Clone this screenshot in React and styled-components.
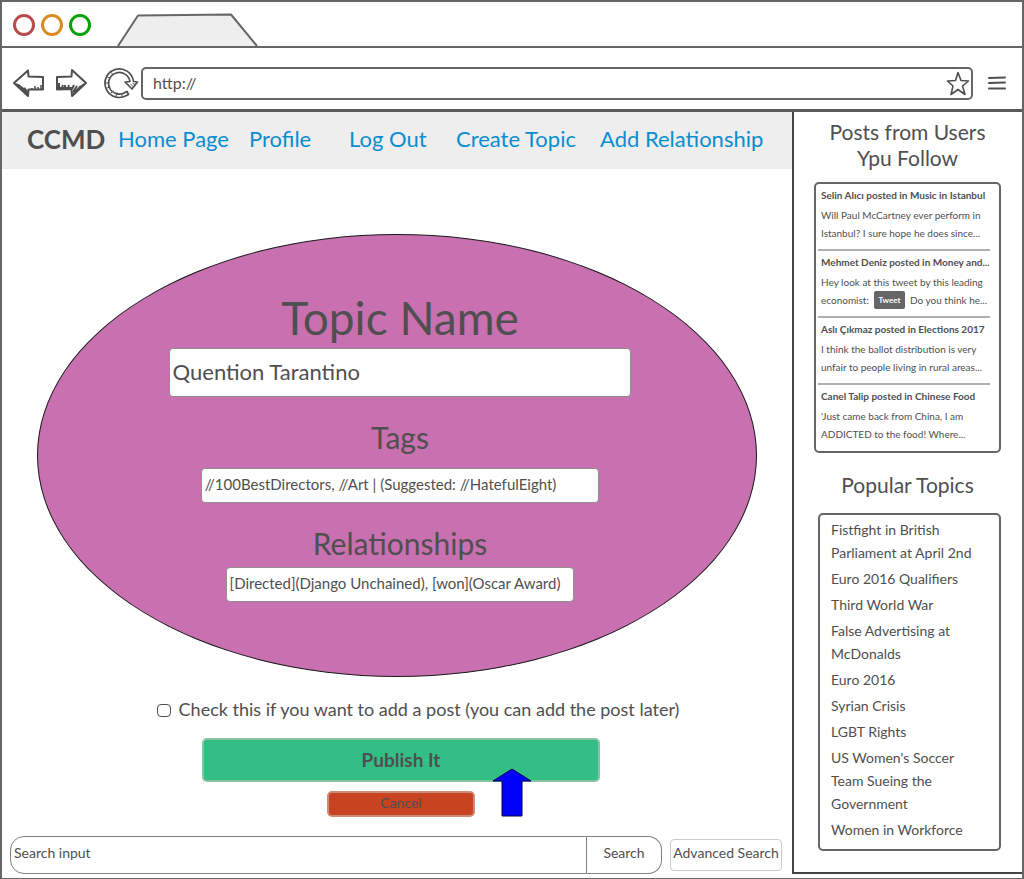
import React from "react";
import styled, { createGlobalStyle } from "styled-components";

const ink = "#4f4f4f";
const line = "#666666";

const GlobalStyle = createGlobalStyle`
  *, *::before, *::after { box-sizing: border-box; }
  body { margin: 0; background: #fff; }
  body, button, input {
    font-family: Lato, "Open Sans", sans-serif;
    color: ${ink};
  }
  h1, h2, h3, p, ul { margin: 0; padding: 0; }
`;

const Window = styled.div`
  display: flex;
  flex-direction: column;
  min-height: 100vh;
  border: 2px solid ${line};
  border-bottom-width: 1px;
`;

const TabBar = styled.div`
  display: flex;
  align-items: flex-end;
  height: 46px;
  border-bottom: 2px solid ${line};
`;

const Lights = styled.div`
  display: flex;
  gap: 6px;
  align-self: center;
  padding: 2px 0 0 11px;
`;

const Light = styled.span`
  width: 22px;
  height: 22px;
  border: 3px solid ${(p) => p.$color};
  border-radius: 50%;
`;

const TabShape = styled.svg`
  display: block;
  margin-left: 25px;
`;

const Toolbar = styled.div`
  display: flex;
  align-items: center;
  height: 64px;
  padding: 9px 16px 0 10px;
  border-bottom: 3px solid #5a5a5a;
`;

const ToolButton = styled.button`
  display: flex;
  flex: none;
  padding: 0;
  margin-right: ${(p) => p.$gap || 0}px;
  border: 0;
  background: none;
`;

const AddressBar = styled.div`
  display: flex;
  flex: 1;
  align-items: center;
  min-width: 0;
  height: 33px;
  margin-right: 15px;
  border: 2px solid ${line};
  border-radius: 5px;
`;

const Address = styled.input`
  flex: 1;
  min-width: 0;
  padding: 0 10px 2px;
  border: 0;
  background: none;
  font-size: 16px;
  outline: none;
`;

const Page = styled.div`
  display: grid;
  flex: 1;
  grid-template-columns: minmax(0, 1fr) 230px;
`;

const Main = styled.main`
  display: flex;
  flex-direction: column;
  padding-bottom: 4px;
`;

const Nav = styled.nav`
  display: grid;
  grid-template-columns: 91fr 131fr 100fr 107fr 144fr 165fr;
  align-items: center;
  height: 57px;
  padding: 0 27px 4px 25px;
  background: #eeeeee;
  white-space: nowrap;
`;

const Brand = styled.strong`
  font-size: 26px;
  line-height: 36px;
`;

const NavLink = styled.a`
  color: #0a8dd0;
  font-size: 22px;
  line-height: 36px;
  text-decoration: none;
`;

const TopicForm = styled.form`
  display: flex;
  flex: 1;
  flex-direction: column;
`;

const Oval = styled.div`
  display: flex;
  flex-direction: column;
  align-items: center;
  margin: 65px 35px 0;
  padding: 55px 0 74px 6px;
  border: 1px solid #1a1a1a;
  border-radius: 50%;
  background: #c970b0;
`;

const FieldLabel = styled.label`
  margin: ${(p) => (p.$large ? 0 : 20)}px 0 ${(p) => p.$space}px;
  font-size: ${(p) => (p.$large ? 46 : 30)}px;
  line-height: ${(p) => (p.$large ? 56 : 40)}px;
`;

const Field = styled.input`
  width: ${(p) => p.$width};
  height: ${(p) => (p.$large ? 49 : 35)}px;
  padding: 0 3px 3px;
  border: 1px solid #8f8f8f;
  border-radius: 4px;
  background: #fff;
  font-size: ${(p) => (p.$large ? 22 : 15)}px;
`;

const Actions = styled.div`
  position: relative;
  display: flex;
  flex-direction: column;
  align-items: center;
  padding: 18px 0 19px 8px;
`;

const CheckLabel = styled.label`
  display: flex;
  align-items: center;
  gap: 8px;
  margin: 0 0 15px 34px;
  font-size: 18px;
  line-height: 28px;
  white-space: nowrap;
`;

const CheckBox = styled.input`
  appearance: none;
  width: 14px;
  height: 13px;
  margin: 2px 0 0;
  border: 1px solid ${ink};
  border-radius: 4px;
  background: #fff;
`;

const PublishButton = styled.button`
  width: 51%;
  height: 44px;
  margin-bottom: 9px;
  padding: 0 0 2px;
  border: 2px solid #86c4a6;
  border-radius: 5px;
  background: #33be86;
  font-size: 19px;
  font-weight: 700;
`;

const CancelButton = styled.button`
  width: 19%;
  height: 26px;
  padding: 0 0 4px;
  border: 2px solid #d08c78;
  border-radius: 5px;
  background: #c8431f;
  font-size: 14px;
`;

const Pointer = styled.svg`
  position: absolute;
  top: 91px;
  left: calc(50% + 95px);
`;

const SearchRow = styled.form`
  display: flex;
  align-items: center;
  margin-top: auto;
  padding: 0 10px 0 8px;
`;

const SearchInput = styled.input`
  flex: 1;
  min-width: 0;
  height: 38px;
  padding: 0 3px 5px;
  border: 1px solid #808080;
  border-radius: 14px 0 0 14px;
  font-size: 14px;
  &::placeholder { color: ${ink}; opacity: 1; }
`;

const SearchButton = styled.button`
  width: 75px;
  height: 38px;
  padding: 0 0 5px;
  border: 1px solid #808080;
  border-left: 0;
  border-radius: 0 14px 14px 0;
  background: #fff;
  font-size: 14px;
`;

const AdvancedButton = styled.button`
  width: 112px;
  height: 32px;
  margin-left: 8px;
  padding: 0 0 5px;
  border: 1px solid #cccccc;
  border-radius: 4px;
  background: #fff;
  font-size: 14px;
  white-space: nowrap;
`;

const Sidebar = styled.aside`
  margin-bottom: 4px;
  padding: 7px 21px 0 20px;
  border: solid #444444;
  border-width: 0 0 2px 2px;
`;

const SideTitle = styled.h2`
  font-size: 21px;
  font-weight: 400;
  line-height: 26px;
  text-align: center;
`;

const PostList = styled.ul`
  height: 271px;
  margin: 11px 0 19px;
  border: 2px solid ${line};
  border-radius: 5px;
  list-style: none;
`;

const Post = styled.li`
  margin: 0 9px 0 2px;
  padding: 0 0 7px 3px;
  border-bottom: 2px solid #b0b0b0;
  white-space: nowrap;
  &:last-child { border-bottom: 0; }
`;

const PostTitle = styled.h3`
  font-size: 10px;
  font-weight: 700;
  line-height: 22px;
`;

const PostText = styled.p`
  font-size: 10px;
  line-height: 18px;
`;

const TweetButton = styled.button`
  height: 18px;
  margin: 0 2px;
  padding: 0 5px;
  border: 0;
  border-radius: 2px;
  background: ${line};
  color: #fff;
  font-size: 8px;
  font-weight: 700;
  vertical-align: top;
`;

const TopicList = styled.ul`
  display: flex;
  flex-direction: column;
  gap: 3px;
  margin: 15px 0 0 4px;
  padding: 3px 10px 8px 11px;
  border: 2px solid ${line};
  border-radius: 5px;
  font-size: 14px;
  line-height: 23px;
  list-style: none;
  white-space: nowrap;
`;

const TopicLink = styled.a`
  color: ${ink};
  text-decoration: none;
`;

const navItems = ["Home Page", "Profile", "Log Out", "Create Topic", "Add Relationship"];

const posts = [
  {
    title: "Selin Alıcı posted in Music in Istanbul",
    text: <>Will Paul McCartney ever perform in<br />Istanbul? I sure hope he does since...</>,
  },
  {
    title: "Mehmet Deniz posted in Money and...",
    text: (
      <>
        Hey look at this tweet by this leading<br />
        economist: <TweetButton type="button">Tweet</TweetButton> Do you think he...
      </>
    ),
  },
  {
    title: "Aslı Çıkmaz posted in Elections 2017",
    text: <>I think the ballot distribution is very<br />unfair to people living in rural areas...</>,
  },
  {
    title: "Canel Talip posted in Chinese Food",
    text: <>'Just came back from China, I am<br />ADDICTED to the food! Where...</>,
  },
];

const topics = [
  ["Fistfight in British", "Parliament at April 2nd"],
  ["Euro 2016 Qualifiers"],
  ["Third World War"],
  ["False Advertising at", "McDonalds"],
  ["Euro 2016"],
  ["Syrian Crisis"],
  ["LGBT Rights"],
  ["US Women's Soccer", "Team Sueing the", "Government"],
  ["Women in Workforce"],
];

function BackIcon() {
  return (
    <svg width="34" height="30" viewBox="0 0 34 30" fill="none" stroke={ink} strokeWidth="2" strokeLinejoin="round">
      <path d="M2 15 16 2.500 16.500 8.500 31 9 31 21.500 16.500 21.500 16 28Z" />
      <path d="M4 16 16 26.500M6 17 15 24M12 20 16 25" strokeWidth="2.500" />
      <path d="M29 21v-4M26 21v-2M23 21v-3M20 21v-1" strokeWidth="1.500" />
    </svg>
  );
}

function ForwardIcon() {
  return (
    <svg width="34" height="30" viewBox="0 0 34 30" fill="none" stroke={ink} strokeWidth="2" strokeLinejoin="round">
      <path d="M32 15 18 2 17.500 8.500 3 9 3 21.500 17.500 21 18 28Z" />
      <path d="M4 20h14M5 20v-5M8 20l1-3M11 20v-3M14 20l1-3M18 21l2-4M19 24l4-6M19 26l8-8M30 16 19 27" />
    </svg>
  );
}

function ReloadIcon() {
  return (
    <svg width="35" height="32" viewBox="0 0 35 32" fill="none" stroke={ink} strokeLinejoin="round" strokeLinecap="round">
      <path d="M22.500 28.500A14.300 14.300 0 1 1 29.500 14.500L33.500 15 28 22 21 15 26 14.500A10.800 10.800 0 1 0 21 25.500L23 24.500 24.500 27.500Z" strokeWidth="1.700" />
      <path d="M3.500 10l2.500 1M2 16l3 0M3 21l3-1M7 26l2-2M12 29l1-3M18 30v-3M7 5.500l2 2M29 16.500l2 1M27 17.500l2 2" strokeWidth="1" />
    </svg>
  );
}

function StarIcon() {
  return (
    <svg width="24" height="25" viewBox="0 0 24 25" fill="none" stroke={ink} strokeWidth="1.600" strokeLinejoin="round">
      <path d="M12 1.500 15 9.500 22.500 10 16.500 15 19 23.500 12 18.500 5 23.500 7 15 1.500 10 9.500 9.500Z" />
    </svg>
  );
}

function MenuIcon() {
  return (
    <svg width="18" height="14" viewBox="0 0 18 14" stroke={ink} strokeWidth="2" strokeLinecap="round">
      <path d="M1 2 17 1.500M1 7 17 6.500M1 12.500H17" />
    </svg>
  );
}

export default function App() {
  return (
    <>
      <GlobalStyle />
      <Window>
        <TabBar>
          <Lights>
            <Light $color="#bb4b4b" />
            <Light $color="#db8a20" />
            <Light $color="#07a307" />
          </Lights>
          <TabShape width="144" height="33" viewBox="0 0 144 33">
            <path d="M2 33 22 2.500 115 1.500 141 33" fill="#eeeeee" stroke={line} strokeWidth="2" strokeLinejoin="round" />
          </TabShape>
        </TabBar>
        <Toolbar>
          <ToolButton type="button" aria-label="Back" $gap={8}><BackIcon /></ToolButton>
          <ToolButton type="button" aria-label="Forward" $gap={16}><ForwardIcon /></ToolButton>
          <ToolButton type="button" aria-label="Reload" $gap={2}><ReloadIcon /></ToolButton>
          <AddressBar>
            <Address aria-label="Address" defaultValue="http://" />
            <ToolButton type="button" aria-label="Bookmark" $gap={1}><StarIcon /></ToolButton>
          </AddressBar>
          <ToolButton type="button" aria-label="Menu"><MenuIcon /></ToolButton>
        </Toolbar>
        <Page>
          <Main>
            <Nav>
              <Brand>CCMD</Brand>
              {navItems.map((item) => (
                <NavLink href="#" key={item}>{item}</NavLink>
              ))}
            </Nav>
            <TopicForm>
              <Oval>
                <FieldLabel htmlFor="topic" $large $space={2}>Topic Name</FieldLabel>
                <Field id="topic" $large $width="65%" defaultValue="Quention Tarantino" />
                <FieldLabel htmlFor="tags" $space={11}>Tags</FieldLabel>
                <Field id="tags" $width="56%" defaultValue="//100BestDirectors, //Art | (Suggested: //HatefulEight)" />
                <FieldLabel htmlFor="relationships" $space={4}>Relationships</FieldLabel>
                <Field id="relationships" $width="49%" defaultValue="[Directed](Django Unchained), [won](Oscar Award)" />
              </Oval>
              <Actions>
                <CheckLabel>
                  <CheckBox type="checkbox" />
                  Check this if you want to add a post (you can add the post later)
                </CheckLabel>
                <PublishButton type="button">Publish It</PublishButton>
                <CancelButton type="button">Cancel</CancelButton>
                <Pointer width="40" height="50" viewBox="0 0 40 50" aria-hidden="true">
                  <path d="M20 1 39 13H30V48H10V13H1Z" fill="#0000ff" stroke="#00004d" />
                </Pointer>
              </Actions>
            </TopicForm>
            <SearchRow>
              <SearchInput aria-label="Search input" placeholder="Search input" />
              <SearchButton type="button">Search</SearchButton>
              <AdvancedButton type="button">Advanced Search</AdvancedButton>
            </SearchRow>
          </Main>
          <Sidebar>
            <SideTitle>Posts from Users<br />Ypu Follow</SideTitle>
            <PostList>
              {posts.map((post) => (
                <Post key={post.title}>
                  <PostTitle>{post.title}</PostTitle>
                  <PostText>{post.text}</PostText>
                </Post>
              ))}
            </PostList>
            <SideTitle>Popular Topics</SideTitle>
            <TopicList>
              {topics.map((lines) => (
                <li key={lines[0]}>
                  <TopicLink href="#">
                    {lines.map((text, i) => (
                      <React.Fragment key={text}>
                        {i > 0 && <br />}
                        {text}
                      </React.Fragment>
                    ))}
                  </TopicLink>
                </li>
              ))}
            </TopicList>
          </Sidebar>
        </Page>
      </Window>
    </>
  );
}
